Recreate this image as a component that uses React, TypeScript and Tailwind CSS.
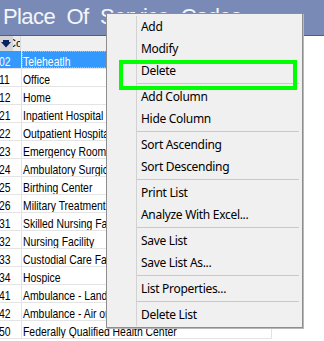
import React from "react";

const rows: [string, string][] = [
  ["02", "Teleheatlh"],
  ["11", "Office"],
  ["12", "Home"],
  ["21", "Inpatient Hospital"],
  ["22", "Outpatient Hospital"],
  ["23", "Emergency Room - Hospital"],
  ["24", "Ambulatory Surgical Center"],
  ["25", "Birthing Center"],
  ["26", "Military Treatment Facility"],
  ["31", "Skilled Nursing Facility"],
  ["32", "Nursing Facility"],
  ["33", "Custodial Care Facility"],
  ["34", "Hospice"],
  ["41", "Ambulance - Land"],
  ["42", "Ambulance - Air or Water"],
  ["50", "Federally Qualified Health Center"],
];

// null = separator
const menu: (string | null)[] = [
  "Add",
  "Modify",
  "Delete",
  null,
  "Add Column",
  "Hide Column",
  null,
  "Sort Ascending",
  "Sort Descending",
  null,
  "Print List",
  "Analyze With Excel...",
  null,
  "Save List",
  "Save List As...",
  null,
  "List Properties...",
  null,
  "Delete List",
];

function SortArrow() {
  return (
    <svg width="10" height="8" viewBox="0 0 10 8" className="block">
      <polygon points="2,0 8,0 8,2 10,2 5,7.5 0,2 2,2" fill="#0b1f66" />
    </svg>
  );
}

export default function App() {
  return (
    <div className="relative w-[324px] h-[341px] overflow-hidden bg-white">
      {/* title bar */}
      <div className="h-[36px] bg-[#7a8ab7] border-b border-[#5e5e5e] pl-[3px] pt-[6px]">
        <div className="text-[22px] leading-[22px] text-[#f4f6fb] whitespace-nowrap tracking-[-0.6px] [word-spacing:6px] font-['Liberation_Sans',Arial,sans-serif]">
          Place Of Service Codes
        </div>
      </div>

      {/* list */}
      <div className="w-[272px] border-r border-[#e2e2e2] font-['Liberation_Sans',Arial,sans-serif] text-[13px]">
        <div className="flex h-[15px]">
          <div className="w-[13px] bg-[#d4d4d4] flex items-center pl-[1px]">
            <SortArrow />
          </div>
          <div className="w-[8px] bg-[#ececec] overflow-hidden border-r border-[#d9d9d9]">
            <span className="block -ml-[5px] text-[11px] leading-[15px] text-black whitespace-nowrap">Cod</span>
          </div>
          <div className="flex-1 bg-[#f0f0f0]" />
        </div>
        {rows.map(([code, name], i) => {
          const sel = i === 0;
          return (
            <div
              key={code}
              className={`flex h-[18px] border-b border-[#e4e4e4] ${sel ? "bg-[#3399ff] text-white" : "text-black"}`}
            >
              <div className="w-[22px] h-[17px] border-r border-[#e4e4e4] overflow-hidden leading-[21px] whitespace-nowrap">
                <span className="inline-block origin-left scale-x-[0.8] -ml-px">{code}</span>
              </div>
              <div
                className={`flex-1 h-[17px] overflow-hidden pl-[1px] leading-[21px] whitespace-nowrap ${
                  sel ? "outline outline-1 outline-dotted outline-[#ffb347] -outline-offset-1" : ""
                }`}
              >
                <span className="inline-block origin-left scale-x-[0.8]">{name}</span>
              </div>
            </div>
          );
        })}
      </div>

      {/* context menu */}
      <div className="absolute left-[106px] top-[13px] w-[197px] bg-[#f0f0f0] border border-[#8e8e8e] shadow-[1px_1px_0_#b8b8b8] pt-[2px] pb-[1px] flex font-['Noto_Sans',sans-serif] text-[12px] tracking-[-0.3px] text-black">
        <div className="w-[30px] border-r border-[#d2d2d2]" />
        <div className="flex-1 flex flex-col">
          {menu.map((m, i) =>
            m === null ? (
              <div key={i} className="h-[4px] pt-[1px] mr-[3px]">
                <div className="border-t border-[#c9c9c9]" />
              </div>
            ) : (
              <div key={i} className="h-[22px] flex items-center pl-[4px] whitespace-nowrap">
                {m}
              </div>
            )
          )}
        </div>
      </div>

      {/* highlight box */}
      <div className="absolute left-[119px] top-[60px] w-[178px] h-[30px] border-4 border-[#00ff00]" />
    </div>
  );
}
